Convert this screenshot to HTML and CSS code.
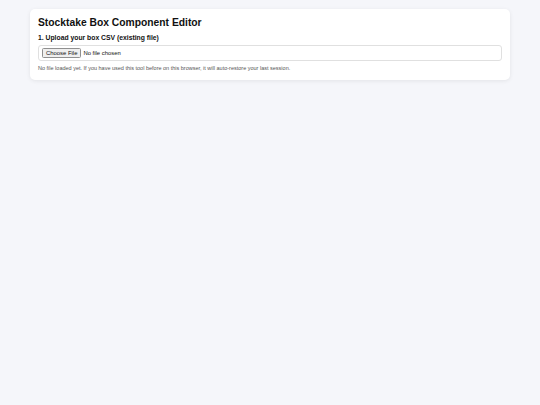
FILE: index.html
```html
<!DOCTYPE html>
<html lang="en">
<head>
<meta charset="utf-8">
<title>Stocktake Box Component Editor</title>
<link rel="stylesheet" href="styles.css">
</head>
<body>
<main class="page">
  <section class="card">
    <h1 class="title">Stocktake Box Component Editor</h1>
    <h2 class="step">1. Upload your box CSV (existing file)</h2>
    <div class="file-box">
      <input type="file" accept=".csv" class="file-input">
    </div>
    <p class="hint">No file loaded yet. If you have used this tool before on this browser, it will auto-restore your last session.</p>
  </section>
</main>
</body>
</html>
```

FILE: styles.css
```css
html {
  background: #f5f6fa;
}
body {
  margin: 0;
  padding: 9px 0;
  background: #f5f6fa;
  font-family: "Liberation Sans", Arial, sans-serif;
  color: #111;
}
.page {
  max-width: 480px;
  margin: 0 auto;
}
.card {
  background: #fff;
  border-radius: 5px;
  padding: 8px;
  box-shadow: 0 1px 4px rgba(0, 0, 0, 0.08);
}
.title {
  font-size: 10.3px;
  line-height: 11.5px;
  font-weight: 700;
  margin: 0 0 5px;
}
.step {
  font-size: 6.8px;
  line-height: 8px;
  font-weight: 700;
  margin: 0 0 3.5px;
}
.file-box {
  border: 1px solid #e0e0e0;
  border-radius: 3px;
  padding: 1.5px 3px;
  display: flex;
  align-items: center;
  min-height: 11px;
}
.file-input {
  font-family: "Liberation Sans", Arial, sans-serif;
  font-size: 5.9px;
  color: #111;
}
.file-input::file-selector-button {
  font-family: "Liberation Sans", Arial, sans-serif;
  font-size: 5.9px;
  color: #111;
  background: #efefef;
  border: 1px solid #8f8f8f;
  border-radius: 1.5px;
  padding: 1.2px 3px;
  margin-right: 2px;
}
.hint {
  font-size: 5.5px;
  line-height: 6.5px;
  color: #555;
  margin: 4px 0 0;
}
```
